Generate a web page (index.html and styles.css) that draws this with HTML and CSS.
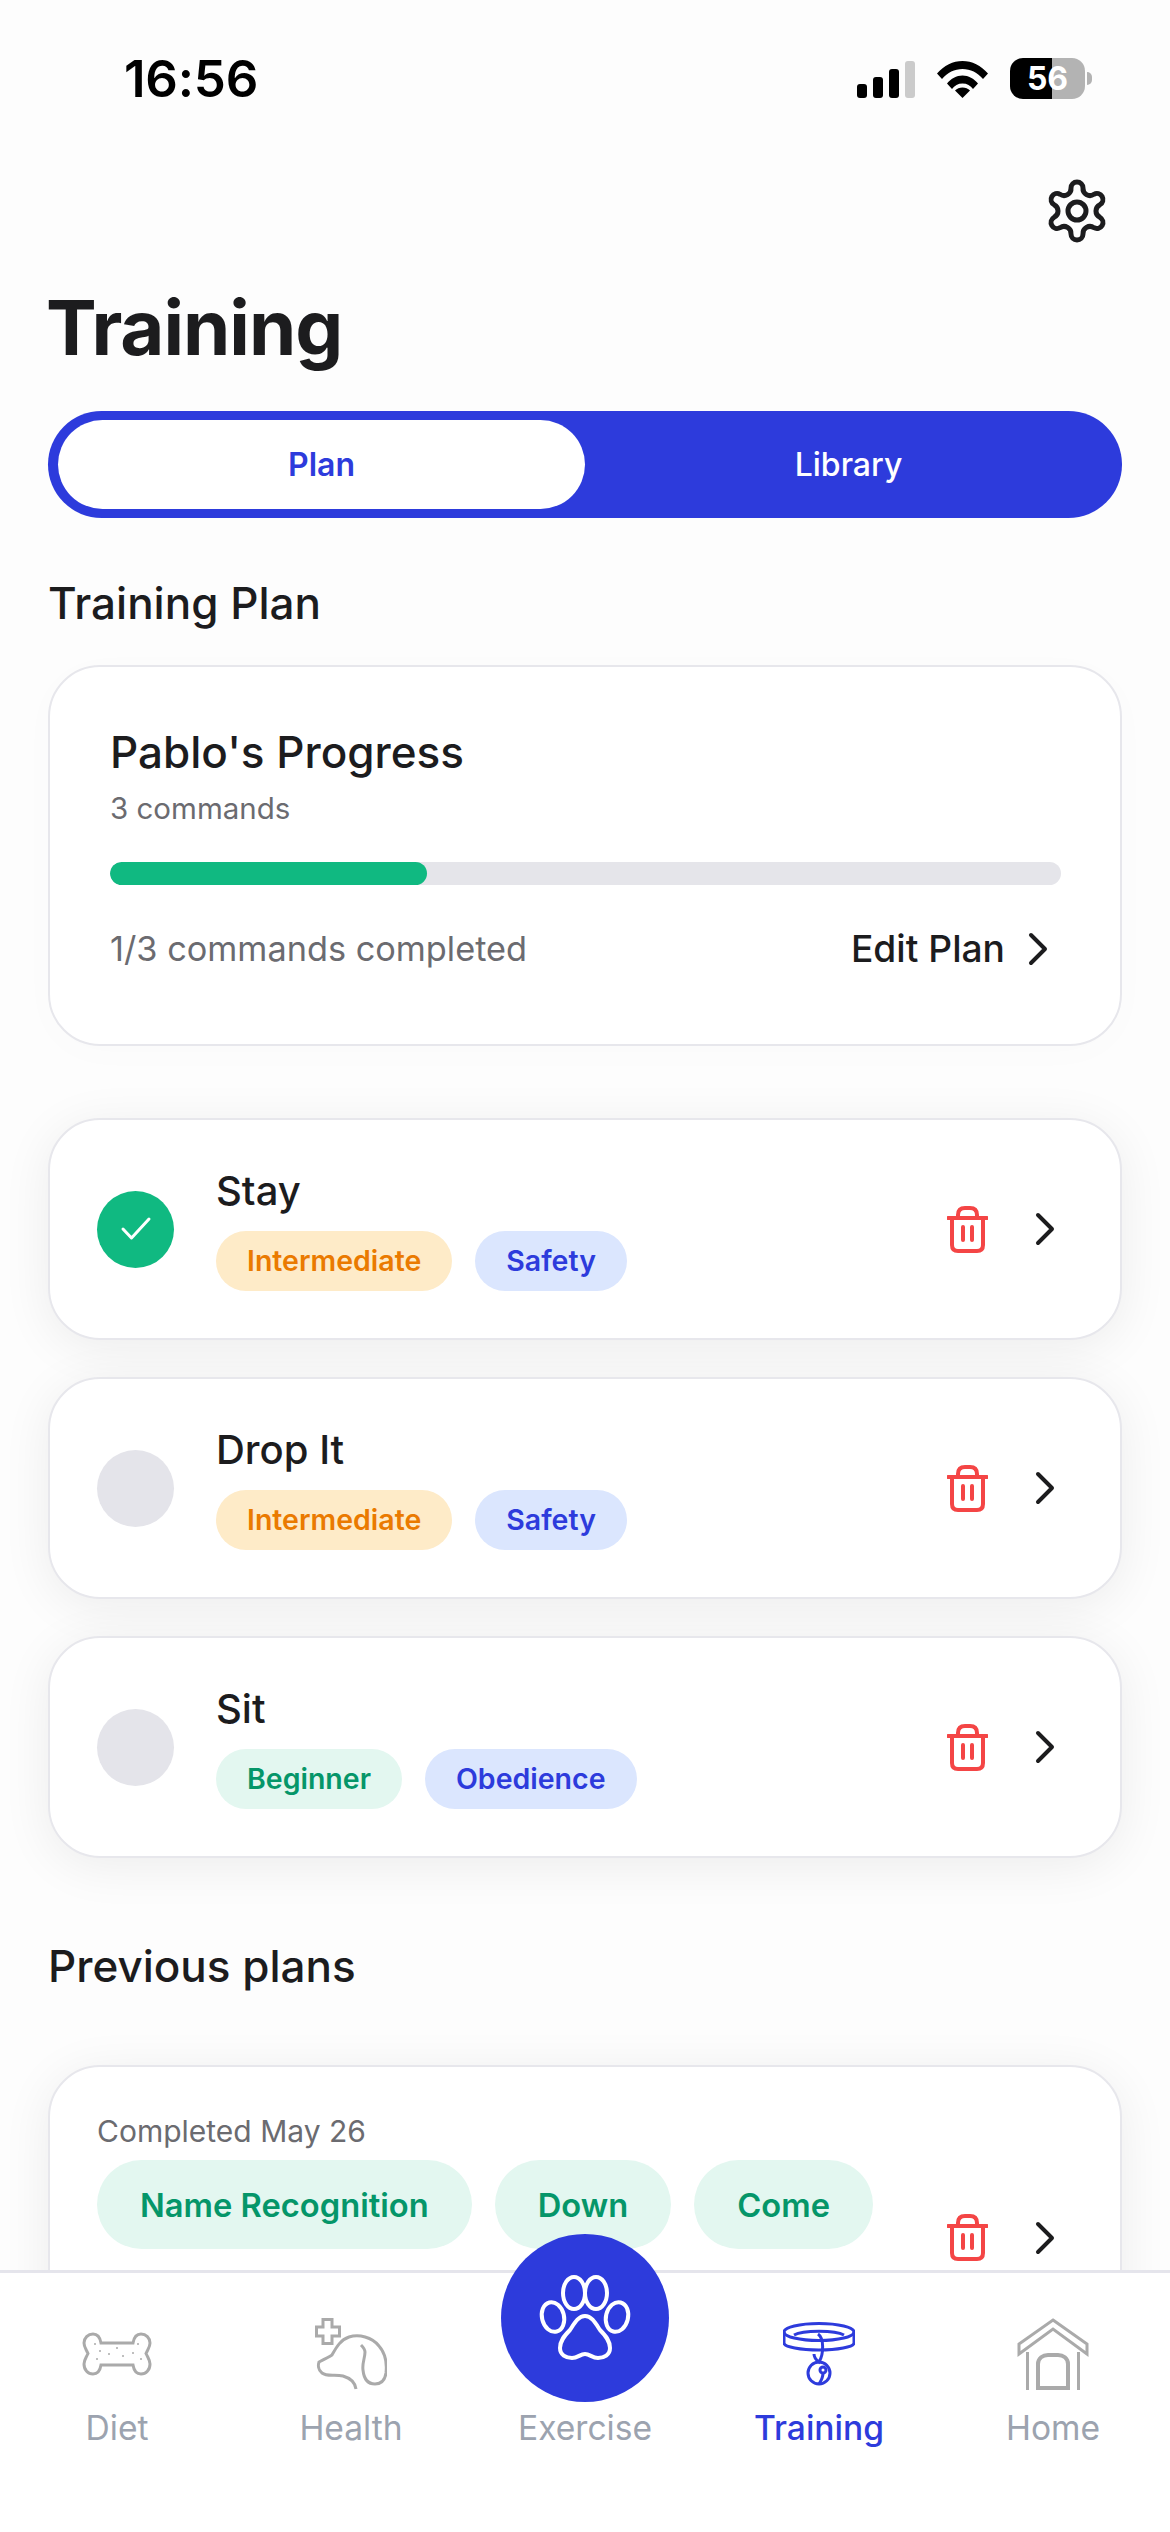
FILE: index.html
```html
<!DOCTYPE html>
<html lang="en">
<head>
    <meta charset="UTF-8">
    <meta name="viewport" content="width=device-width, initial-scale=1.0">
    <title>Training</title>
    <link rel="stylesheet" href="styles.css">
</head>
<body>
    <main class="screen">
        <div class="status-bar">
            <span class="clock">16:56</span>
            <div class="status-icons">
                <div class="signal">
                    <span class="bar bar-1"></span>
                    <span class="bar bar-2"></span>
                    <span class="bar bar-3"></span>
                    <span class="bar bar-4"></span>
                </div>
                <svg class="wifi" viewBox="0 0 51 37">
                    <path d="M0 12.5C7 4.5 16 0 25.5 0S44 4.500 51 12.5L46 18C40.500 11.500 33.500 8 25.500 8S10.500 11.500 5 18Z"/>
                    <path d="M10 22.500C14 17.500 19.500 14.500 25.500 14.500S37 17.500 41 22.500L36 28C33.500 24.500 30 22.500 25.500 22.500S17.500 24.500 15 28Z"/>
                    <path d="M18 29.500C20 27.500 22.500 26.500 25.500 26.500S31 27.500 33 29.500L25.500 37Z"/>
                </svg>
                <div class="battery">
                    <div class="battery-body"><span>56</span></div>
                    <span class="battery-cap"></span>
                </div>
            </div>
        </div>

        <div class="top-row">
            <svg class="gear" viewBox="0 0 64 64">
                <path d="M26 9A6 6 0 0 1 38 9A7 7 0 0 0 48.920 15.300A6 6 0 0 1 54.920 25.700A7 7 0 0 0 54.920 38.300A6 6 0 0 1 48.920 48.700A7 7 0 0 0 38 55A6 6 0 0 1 26 55A7 7 0 0 0 15.080 48.700A6 6 0 0 1 9.080 38.300A7 7 0 0 0 9.080 25.700A6 6 0 0 1 15.080 15.300A7 7 0 0 0 26 9Z"/>
                <circle cx="32" cy="32" r="9"/>
            </svg>
        </div>

        <h1>Training</h1>

        <div class="segments">
            <div class="segment active">Plan</div>
            <div class="segment">Library</div>
        </div>

        <h2 class="section-title">Training Plan</h2>

        <section class="card progress-card">
            <h3>Pablo's Progress</h3>
            <p class="count">3 commands</p>
            <div class="track"><div class="fill" style="width: 33.3%"></div></div>
            <div class="progress-foot">
                <span class="done-text">1/3 commands completed</span>
                <span class="edit-link">Edit Plan
                    <svg class="chevron" viewBox="0 0 20 34"><path d="M3 3L17 17L3 31"/></svg>
                </span>
            </div>
        </section>

        <div class="item-list">
            <article class="card item">
                <span class="check done">
                    <svg viewBox="0 0 32 32"><path d="M3 16L11.500 25L29 6"/></svg>
                </span>
                <div class="item-body">
                    <h4>Stay</h4>
                    <div class="pills">
                        <span class="pill orange">Intermediate</span>
                        <span class="pill blue">Safety</span>
                    </div>
                </div>
                <div class="item-actions">
                    <svg class="trash" viewBox="0 0 41 47"><path d="M1 12H40M11 12V9C11 4 14 2 18 2H23C27 2 30 4 30 9V12M5 12V39C5 43 7 45 11 45H30C34 45 36 43 36 39V12M16 21V34M25 21V34"/></svg>
                    <svg class="chevron" viewBox="0 0 20 34"><path d="M3 3L17 17L3 31"/></svg>
                </div>
            </article>

            <article class="card item">
                <span class="check"></span>
                <div class="item-body">
                    <h4>Drop It</h4>
                    <div class="pills">
                        <span class="pill orange">Intermediate</span>
                        <span class="pill blue">Safety</span>
                    </div>
                </div>
                <div class="item-actions">
                    <svg class="trash" viewBox="0 0 41 47"><path d="M1 12H40M11 12V9C11 4 14 2 18 2H23C27 2 30 4 30 9V12M5 12V39C5 43 7 45 11 45H30C34 45 36 43 36 39V12M16 21V34M25 21V34"/></svg>
                    <svg class="chevron" viewBox="0 0 20 34"><path d="M3 3L17 17L3 31"/></svg>
                </div>
            </article>

            <article class="card item">
                <span class="check"></span>
                <div class="item-body">
                    <h4>Sit</h4>
                    <div class="pills">
                        <span class="pill green">Beginner</span>
                        <span class="pill blue">Obedience</span>
                    </div>
                </div>
                <div class="item-actions">
                    <svg class="trash" viewBox="0 0 41 47"><path d="M1 12H40M11 12V9C11 4 14 2 18 2H23C27 2 30 4 30 9V12M5 12V39C5 43 7 45 11 45H30C34 45 36 43 36 39V12M16 21V34M25 21V34"/></svg>
                    <svg class="chevron" viewBox="0 0 20 34"><path d="M3 3L17 17L3 31"/></svg>
                </div>
            </article>
        </div>

        <h2 class="section-title previous-title">Previous plans</h2>

        <article class="card previous-card">
            <p class="completed">Completed May 26</p>
            <div class="previous-row">
                <div class="pills big">
                    <span class="pill green">Name Recognition</span>
                    <span class="pill green">Down</span>
                    <span class="pill green">Come</span>
                </div>
                <div class="item-actions">
                    <svg class="trash" viewBox="0 0 41 47"><path d="M1 12H40M11 12V9C11 4 14 2 18 2H23C27 2 30 4 30 9V12M5 12V39C5 43 7 45 11 45H30C34 45 36 43 36 39V12M16 21V34M25 21V34"/></svg>
                    <svg class="chevron" viewBox="0 0 20 34"><path d="M3 3L17 17L3 31"/></svg>
                </div>
            </div>
        </article>
    </main>

    <nav class="tabbar">
        <div class="tab">
            <svg class="tab-icon" viewBox="0 0 72 72">
                <path d="M20 25H52C53 19 56 16 60 16C65 16 69 20 69 25C69 29 67 31 65 35.500C67 40 69 42 69 46C69 52 65 56 60 56C56 56 53 53 52 47H20C19 53 16 56 12 56C7 56 3 52 3 46C3 42 5 40 7 35.500C5 31 3 29 3 25C3 20 7 16 12 16C16 16 19 19 20 25Z"/>
                <g class="dots">
                    <circle cx="14" cy="26" r="1"/><circle cx="19" cy="33" r="1"/><circle cx="28" cy="36" r="1"/>
                    <circle cx="36" cy="30" r="1"/><circle cx="42" cy="38" r="1"/><circle cx="52" cy="35" r="1"/>
                    <circle cx="57" cy="26" r="1"/><circle cx="60" cy="41" r="1"/><circle cx="16" cy="41" r="1"/>
                </g>
            </svg>
            <span>Diet</span>
        </div>
        <div class="tab">
            <svg class="tab-icon" viewBox="0 0 72 72">
                <path class="plus" d="M8 1.500H17V9H24.500V18H17V25.500H8V18H1.500V9H8Z"/>
                <path d="M41 71C40 64 35 60 28 58C20 56 12 59 7 55C3 52 3 47 4 44C10 41 14 39 17 37C21 30 25 22 34 19C44 16 57 19 64 28C71 36 72 46 71 55C70 62 66 66 60 66C54 66 49 62 48 52C47 45 50 40 50 34C50 31 48 29 46 27"/>
            </svg>
            <span>Health</span>
        </div>
        <div class="tab tab-exercise">
            <span class="paw-button">
                <svg viewBox="0 0 168 168">
                    <ellipse cx="52" cy="83" rx="11" ry="15" transform="rotate(-14 52 83)"/>
                    <ellipse cx="73" cy="59" rx="11" ry="16"/>
                    <ellipse cx="95" cy="59" rx="11" ry="16"/>
                    <ellipse cx="116" cy="83" rx="11" ry="15" transform="rotate(14 116 83)"/>
                    <path d="M84 82C91 82 95 90 99 96C105 102 109 107 109 114C109 121 103 124 97 124C91 124 89 120 84 120C79 120 77 124 71 124C65 124 59 121 59 114C59 107 63 102 69 96C73 90 77 82 84 82Z"/>
                </svg>
            </span>
            <span>Exercise</span>
        </div>
        <div class="tab active">
            <svg class="tab-icon" viewBox="0 0 72 72">
                <ellipse cx="36" cy="14" rx="35" ry="8.500"/>
                <path d="M1 14V25C1 29 18 32 36 32S71 29 71 25V14M11 17C20 12 52 12 61 17"/>
                <path d="M35 16C41 20 41 36 36 44C32 41 31 39 31 36"/>
                <circle cx="36" cy="55" r="11"/>
                <circle cx="40" cy="52" r="3"/>
                <path d="M40 55C40 60 38 63 36 66"/>
            </svg>
            <span>Training</span>
        </div>
        <div class="tab">
            <svg class="tab-icon" viewBox="0 0 72 72">
                <path d="M36 2L70 26V36L36 11L2 36V26Z"/>
                <path d="M10.500 34V72M61.500 34V72"/>
                <path class="door" d="M21 70V46C21 40 26 37 31 37H41C46 37 51 40 51 46V70Z"/>
            </svg>
            <span>Home</span>
        </div>
    </nav>
</body>
</html>
```

FILE: styles.css
```css
* {
    margin: 0;
    padding: 0;
    box-sizing: border-box;
    font-family: Inter, "Noto Sans", sans-serif;
}
html, body {
    width: 1170px;
    height: 2532px;
    overflow: hidden;
}
body {
    display: flex;
    flex-direction: column;
    background: #fdfdfd;
    color: #1c1c1e;
}
.screen {
    flex: 1;
    min-height: 0;
    overflow: hidden;
    padding: 0 48px;
}

/* status bar */
.status-bar {
    display: flex;
    justify-content: space-between;
    align-items: center;
    height: 57px;
    margin-top: 50px;
    padding: 0 76px;
    margin-right: -48px;
    padding-right: 78px;
}
.clock {
    font-size: 51px;
    font-weight: 600;
    color: #000;
    letter-spacing: -0.2px;
    line-height: 57px;
}
.status-icons {
    display: flex;
    align-items: center;
    gap: 22px;
}
.signal {
    display: flex;
    align-items: flex-end;
    gap: 6px;
    height: 37px;
    margin-top: 2px;
}
.bar {
    width: 10px;
    border-radius: 3px;
    background: #000;
}
.bar-1 { height: 14px; }
.bar-2 { height: 21px; }
.bar-3 { height: 29px; }
.bar-4 { height: 37px; background: #cbcbcb; }
.wifi {
    width: 51px;
    height: 37px;
    margin-top: 2px;
    fill: #000;
}
.battery {
    display: flex;
    align-items: center;
    gap: 2px;
}
.battery-body {
    width: 75px;
    height: 41px;
    border-radius: 13px;
    background: linear-gradient(to right, #000 56%, #b3b3b3 56%);
    color: #fff;
    font-size: 32px;
    font-weight: 700;
    line-height: 41px;
    text-align: center;
}
.battery-cap {
    width: 5px;
    height: 13px;
    border-radius: 0 5px 5px 0;
    background: #b3b3b3;
}

.top-row {
    display: flex;
    justify-content: flex-end;
    padding: 72px 13px 0 0;
}
.gear {
    width: 64px;
    height: 64px;
    fill: none;
    stroke: #1c1c1e;
    stroke-width: 5;
}
h1 {
    font-size: 76px;
    font-weight: 700;
    line-height: 92px;
    letter-spacing: -1px;
    margin: 38px 0 0 -2px;
}

.segments {
    display: flex;
    height: 107px;
    margin-top: 38px;
    padding: 9px 10px;
    border-radius: 54px;
    background: #2d3bdc;
}
.segment {
    flex: 1;
    display: flex;
    align-items: center;
    justify-content: center;
    border-radius: 45px;
    font-size: 32px;
    font-weight: 500;
    color: #fff;
}
.segment.active {
    background: #fff;
    color: #2d3bdc;
    font-weight: 600;
}

.section-title {
    font-size: 44px;
    font-weight: 500;
    line-height: 52px;
    margin-top: 59px;
}

.card {
    background: #fff;
    border: 2px solid #e7e7ec;
    border-radius: 52px;
    box-shadow: 0 8px 50px rgba(0, 0, 0, 0.07);
}

.progress-card {
    height: 381px;
    margin-top: 36px;
    padding: 60px 59px 0 60px;
    box-shadow: 0 6px 40px rgba(0, 0, 0, 0.015);
}
.progress-card h3 {
    font-size: 44px;
    font-weight: 500;
    line-height: 50px;
}
.count {
    font-size: 29.5px;
    line-height: 36px;
    color: #6b6b70;
    margin-top: 13px;
}
.track {
    height: 23px;
    margin-top: 36px;
    border-radius: 12px;
    background: #e5e5ea;
    overflow: hidden;
}
.fill {
    height: 100%;
    border-radius: 12px;
    background: #10b981;
}
.progress-foot {
    display: flex;
    justify-content: space-between;
    align-items: center;
    margin-top: 41px;
    padding-right: 13px;
}
.done-text {
    font-size: 34.3px;
    color: #6b6b70;
}
.edit-link {
    display: flex;
    align-items: center;
    gap: 23px;
    font-size: 37.2px;
    font-weight: 500;
}
.chevron {
    width: 20px;
    height: 34px;
    fill: none;
    stroke: #1c1c1e;
    stroke-width: 4;
    stroke-linecap: round;
    stroke-linejoin: round;
}

.item-list {
    display: flex;
    flex-direction: column;
    gap: 37px;
    margin-top: 72px;
}
.item {
    display: flex;
    align-items: center;
    height: 222px;
    padding: 0 65px 0 47px;
}
.check {
    flex: none;
    display: flex;
    align-items: center;
    justify-content: center;
    width: 77px;
    height: 77px;
    border-radius: 50%;
    background: #e4e4ea;
}
.check.done {
    background: #10b981;
}
.check svg {
    width: 32px;
    height: 32px;
    fill: none;
    stroke: #fff;
    stroke-width: 3;
    stroke-linecap: round;
    stroke-linejoin: round;
}
.item-body {
    margin-left: 42px;
}
.item-body h4 {
    font-size: 40px;
    font-weight: 500;
    line-height: 46px;
}
.pills {
    display: flex;
    gap: 23px;
    margin-top: 17px;
}
.pill {
    display: flex;
    align-items: center;
    height: 60px;
    padding: 0 31px;
    border-radius: 30px;
    font-size: 28.5px;
    font-weight: 600;
}
.orange { background: #feebc8; color: #ea7a00; }
.blue { background: #dbe6fe; color: #2d3bdc; }
.green { background: #e3f7f0; color: #059669; }
.item-actions {
    display: flex;
    align-items: center;
    gap: 47px;
    margin-left: auto;
}
.trash {
    width: 41px;
    height: 47px;
    fill: none;
    stroke: #f44545;
    stroke-width: 4;
    stroke-linecap: round;
    stroke-linejoin: round;
}

.previous-title {
    margin-top: 82px;
}
.previous-card {
    height: 300px;
    margin-top: 73px;
    padding: 46px 65px 0 47px;
}
.completed {
    font-size: 30px;
    line-height: 36px;
    color: #6b6b70;
}
.previous-row {
    display: flex;
    align-items: flex-start;
    margin-top: 11px;
}
.pills.big {
    margin-top: 0;
}
.pills.big .pill {
    height: 89px;
    padding: 0 43px;
    border-radius: 45px;
    font-size: 32.7px;
}
.previous-row .item-actions {
    margin-top: 54px;
}

/* bottom tabs */
.tabbar {
    position: relative;
    flex: none;
    display: grid;
    grid-template-columns: repeat(5, 1fr);
    height: 262px;
    padding-top: 45px;
    background: #fff;
    border-top: 3px solid #e5e5ec;
}
.tab {
    display: flex;
    flex-direction: column;
    align-items: center;
    font-size: 33.6px;
    line-height: 40px;
    color: #9ca3af;
}
.tab span:last-child {
    margin-top: 18px;
}
.tab-icon {
    width: 72px;
    height: 72px;
    fill: none;
    stroke: #aaaaaa;
    stroke-width: 3;
}
.tab .dots {
    fill: #aaaaaa;
    stroke: none;
}
.tab-icon .door {
    stroke-width: 4;
}
.tab.active {
    color: #2d3bdc;
    font-weight: 500;
}
.tab.active .tab-icon {
    stroke: #2d3bdc;
}
.tab-exercise {
    padding-top: 72px;
}
/* sits over the card above the bar */
.paw-button {
    position: absolute;
    top: -39px;
    left: 501px;
    width: 168px;
    height: 168px;
    border-radius: 50%;
    background: #2d3bdc;
}
.paw-button svg {
    width: 168px;
    height: 168px;
    fill: none;
    stroke: #fff;
    stroke-width: 4;
}
```
